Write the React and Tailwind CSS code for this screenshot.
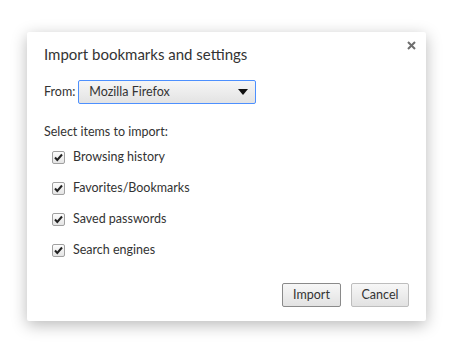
import React from "react";

const items = ["Browsing history", "Favorites/Bookmarks", "Saved passwords", "Search engines"];

const Check = () => (
  <span className="flex h-[13px] w-[13px] items-center justify-center rounded-[2px] border border-[#a0a0a0] bg-gradient-to-b from-[#fdfdfd] to-[#e4e4e4]">
    <svg width="11" height="11" viewBox="0 0 11 11">
      <path d="M2 5.5 L4.3 8 L9 2.5" fill="none" stroke="#222" strokeWidth="2" />
    </svg>
  </span>
);

export default function App() {
  return (
    <div className="h-[346px] w-[461px] bg-white pl-[27px] pt-[32px] font-['Lato',sans-serif] text-[12.5px] text-[#333]">
      <div className="relative flex h-[289px] w-[399px] flex-col rounded-[2px] bg-white pl-[17px] pr-[17px] shadow-[0_4px_16px_rgba(0,0,0,0.28)]">
        <button className="absolute right-[10px] top-[9px] text-[#777]">
          <svg width="9" height="9" viewBox="0 0 9 9">
            <path d="M1 1 L8 8 M8 1 L1 8" stroke="#6e6e6e" strokeWidth="2" />
          </svg>
        </button>
        <div className="mt-[12px] text-[15px] leading-[20px] text-[#333]">Import bookmarks and settings</div>
        <div className="mt-[16px] flex items-center gap-[3px]">
          <span>From:</span>
          <div className="flex h-[24px] w-[178px] items-center justify-between rounded-[2px] border border-[#4d90fe] bg-gradient-to-b from-[#f6f6f6] to-[#e3e3e3] pl-[10px] pr-[7px]">
            <span>Mozilla Firefox</span>
            <svg width="10" height="6" viewBox="0 0 10 6">
              <path d="M0 0 H10 L5 6 Z" fill="#111" />
            </svg>
          </div>
        </div>
        <div className="mt-[20px] leading-[16px]">Select items to import:</div>
        <div className="ml-[8px] mt-[9px] flex flex-col gap-[15px]">
          {items.map((t) => (
            <label key={t} className="flex items-center gap-[8px] leading-[16px]">
              <Check />
              <span>{t}</span>
            </label>
          ))}
        </div>
        <div className="mt-auto mb-[14px] flex justify-end gap-[10px]">
          <button className="h-[24px] w-[59px] rounded-[2px] border border-[#8a8a8a] bg-gradient-to-b from-[#f7f7f7] to-[#e2e2e2] text-[#333]">Import</button>
          <button className="h-[24px] w-[58px] rounded-[2px] border border-[#bdbdbd] bg-gradient-to-b from-[#f7f7f7] to-[#e2e2e2] text-[#333]">Cancel</button>
        </div>
      </div>
    </div>
  );
}
